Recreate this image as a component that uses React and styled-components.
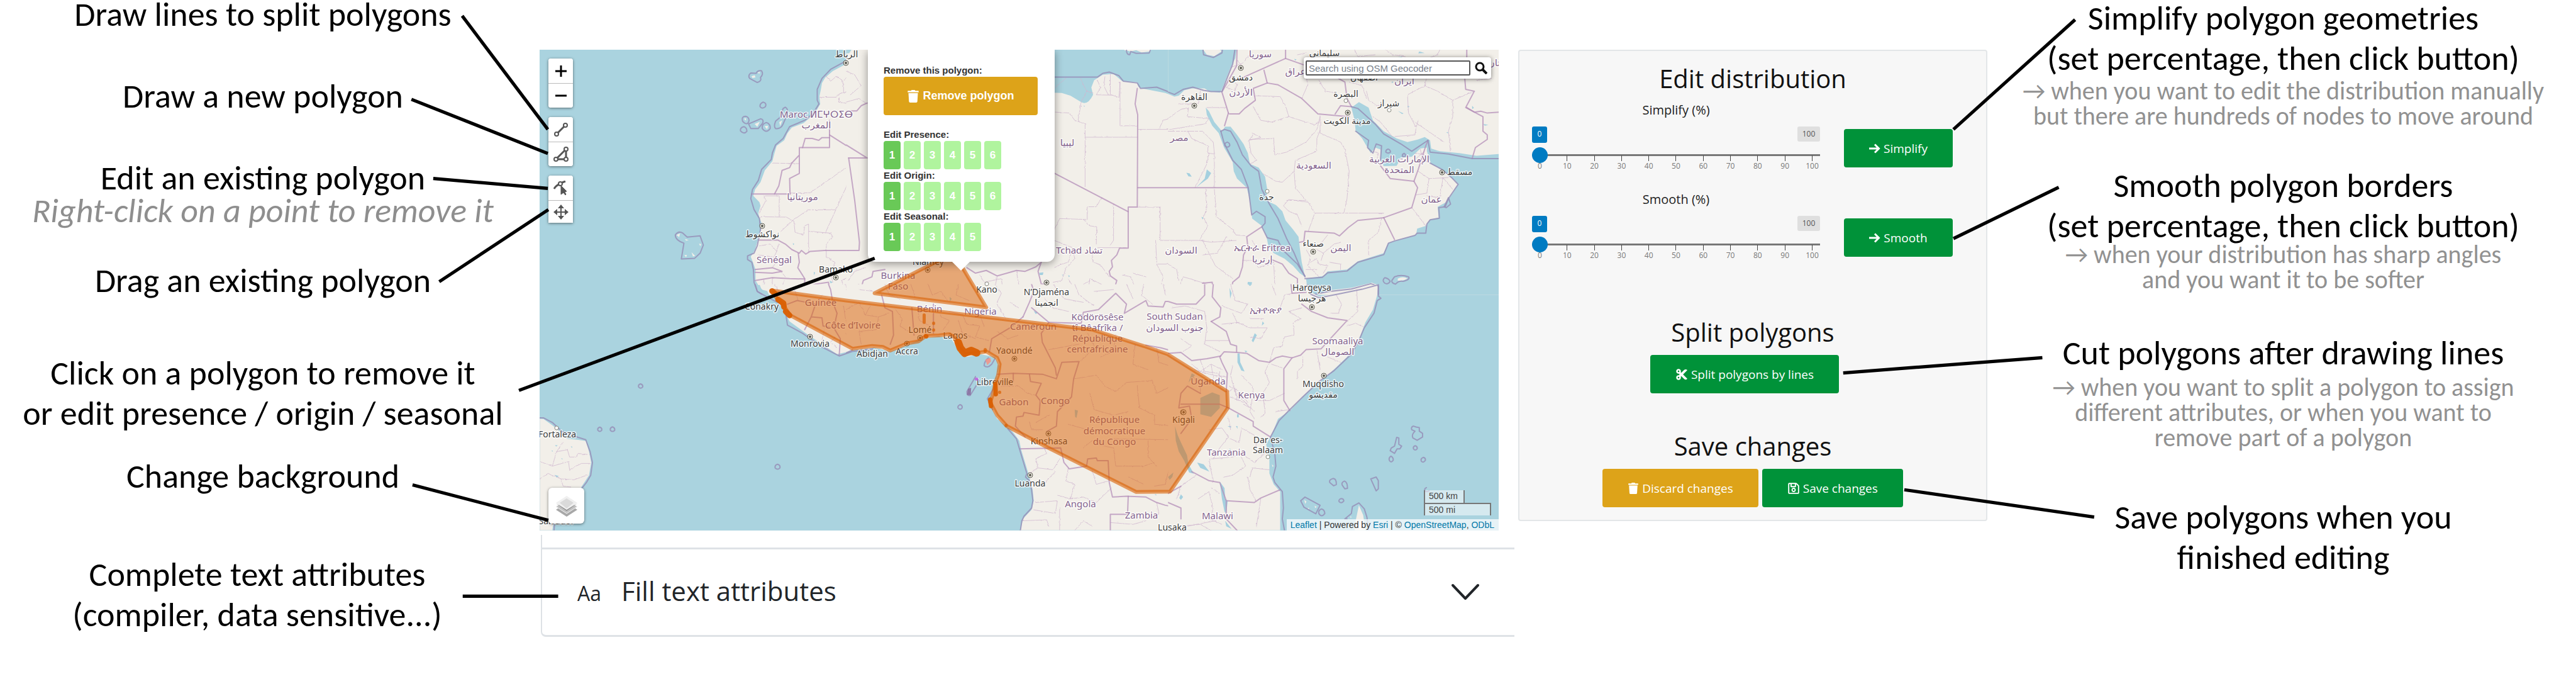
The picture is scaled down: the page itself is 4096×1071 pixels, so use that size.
import React, { useState } from "react";
import styled, { createGlobalStyle } from "styled-components";
import { FaTrash, FaCut, FaRegSave } from "react-icons/fa";

const GlobalStyle = createGlobalStyle`
  *, *::before, *::after { box-sizing: border-box; }
  body { margin: 0; background: #fff; }
  button, input { font: inherit; }
`;

const calloutFont = `Carlito, Calibri, Lato, sans-serif`;
const panelFont = `"Open Sans", "Noto Sans", sans-serif`;
const mapFont = `"Liberation Sans", Arial, sans-serif`;

const Page = styled.div`
  position: relative;
  display: grid;
  grid-template-columns: 858fr 1556fr 746fr 936fr;
  align-items: start;
  min-height: 100vh;
  overflow: hidden;
`;

/* ---------- callouts ---------- */

const Callouts = styled.aside`
  display: flex;
  flex-direction: column;
  min-width: 0;
  margin-top: -3px;
  padding-right: ${(p) => (p.$side === "left" ? "22px" : "0")};
  padding-left: ${(p) => (p.$side === "right" ? "5px" : "0")};
  font-family: ${calloutFont};
  text-align: center;
  white-space: nowrap;
`;

const Callout = styled.p`
  margin: ${(p) => p.$gap || 0}px 0 0;
  padding-right: ${(p) => p.$inset || 0}px;
  font-size: 54px;
  line-height: ${(p) => (p.$tall ? 64 : 52)}px;
  color: #000;
`;

const Tip = styled(Callout)`
  font-style: italic;
  color: #8e8e8e;
`;

const Hint = styled.p`
  margin: ${(p) => p.$gap || 0}px 0 0;
  font-size: 40px;
  line-height: 40px;
  color: #919191;
`;

const Leaders = styled.svg`
  position: absolute;
  top: 0;
  left: 0;
  width: 100%;
  height: auto;
  pointer-events: none;
  z-index: 5;
`;

const leaderLines = [
  [847, 29, 1004, 237],
  [754, 182, 1004, 281],
  [794, 327, 1004, 345],
  [805, 516, 1005, 384],
  [951, 715, 1603, 473],
  [756, 888, 1005, 953],
  [848, 1092, 1023, 1092],
  [3803, 36, 3580, 237],
  [3773, 343, 3580, 437],
  [3743, 655, 3378, 683],
  [3838, 947, 3490, 897],
];

/* ---------- map ---------- */

const Centre = styled.main`
  min-width: 0;
  padding-top: 79px;
`;

const MapFrame = styled.section`
  position: relative;
  margin-right: 31px;
  aspect-ratio: 1525 / 764;
  overflow: hidden;
  background: #aad3df;
  font-family: ${mapFont};
`;

const MapArt = styled.svg`
  display: block;
  width: 100%;
  height: 100%;
`;

const PlaceName = styled.text`
  font-family: "Noto Sans", "DejaVu Sans", sans-serif;
  font-size: ${(p) => (p.$city ? 14 : 15)}px;
  text-anchor: middle;
  fill: ${(p) => (p.$city ? "#3d3d3d" : "#85648f")};
  stroke: rgba(255, 255, 255, 0.75);
  stroke-width: 3px;
  stroke-linejoin: round;
  paint-order: stroke;
`;

const SX = 0.343;
const SY = 0.2892;

/* Each tile keeps its own drawing units; x and y place it on the map. */
const tiles = [
  {
    x: -7.2, y: -9.3, w: 1568, h: 1380,
    land: [
      "M1465,32 1462,45 1445,85 1440,112 1380,150 1345,185 1330,215 1325,250 1318,290 1322,330 1300,375 1270,410 1245,435 1190,460 1170,490 1155,530 1120,560 1110,600 1100,645 1065,695 1045,760 1020,800 1012,835 1040,870 1045,890 1035,930 1040,955 1052,990 1045,1030 1030,1090 1020,1130 1000,1170 1010,1200 1022,1240 1022,1300 1035,1325 1060,1320 1085,1380 1568,1380 1568,32Z",
      "M1003,178 1018,172 1022,184 1008,188Z M1032,158 1042,152 1040,164Z M968,412 978,408 978,422Z M1018,440 1042,428 1030,456Z M1064,452 1080,450 1076,470Z M1132,430 1146,420 1136,452Z M655,1050 672,1042 668,1062Z M725,1145 742,1165 732,1168Z M760,1098 770,1100 766,1112Z M692,1160 704,1160 700,1172Z M695,1072 712,1078 700,1082Z",
    ],
    coast: [
      "M1465,32 1440,95 1370,140 1330,190 1308,250 1308,310 1316,330 1290,380 1250,420 1180,455 1150,520 1115,555 1100,600 1095,635 1050,690 1035,750 1008,800 1000,850 1015,910 1040,960 1045,1020 1030,1110 1015,1150 985,1165 985,1185 1005,1200 1012,1240 1015,1310 1030,1360 1050,1375",
      "M1000,160Q985,175 995,190L1030,212Q1052,205 1045,185 1060,165 1050,148 1030,145 1025,162Z",
      "M1057,320Q1040,330 1043,345 1052,360 1068,345 1075,325 1057,320Z",
      "M975,398Q955,400 962,425 985,455 992,420 990,400 975,398Z M968,455Q950,460 952,478 968,500 982,480 982,460 968,455Z M990,440 1045,412Q1062,415 1055,435L1035,465 1000,465Z M1072,432Q1050,440 1053,465 1072,495 1090,465 1092,440 1072,432Z",
      "M1160,348Q1175,355 1168,390L1150,440Q1140,470 1115,465 1105,455 1115,425L1135,405 1150,355Z",
      "M650,1050Q665,1025 685,1040L705,1062 765,1055 780,1105 765,1150 740,1178 678,1182 690,1095Q650,1080 650,1050Z",
    ],
    major: [
      "M1465,370H1500L1515,345 1540,325", "M1365,420V570H1225V712L1180,740 1182,825", "M1365,500 1540,632",
      "M1240,570 1252,520 1285,520 1315,530 1330,515H1365", "M1003,825H1182", "M1110,825 1130,780 1145,695 1180,680 1190,655 1222,615",
      "M1540,627H1455L1475,860 1497,1085 1505,1135H1340L1275,1140 1255,1155 1235,1135 1225,1150 1190,1130 1160,1100 1125,1078H1040",
      "M1220,1150 1225,1200 1218,1230 1250,1290V1340L1255,1380", "M1020,1240 1100,1230 1145,1250 1100,1260 1020,1255", "M1020,1300 1100,1285 1180,1290 1250,1292",
      "M1250,1340 1300,1320 1360,1310 1370,1370 M1490,1380 1500,1320 1568,1250",
    ],
    minor: [
      "M1320,293H1395L1410,275 1480,250 1500,215 1510,160 1480,130 1475,85 1490,50 1540,60", "M1350,180 1370,205 1395,180 1425,200 1430,240 1430,265",
      "M1410,280V320L1455,330 1465,370 1568,380", "M1445,115 1475,150 1430,200 M1510,160 1568,170", "M1100,655 1225,658", "M1455,670 1275,818 1182,820", "M1460,740 1345,1040",
      "M1060,835H1132V950 M1060,835 1070,860 1040,930", "M1045,950 1165,952 1200,975 1205,1035 1245,1050", "M1392,912H1265L1195,970 1140,1030",
      "M1245,1050 1250,1000 1268,990V1145", "M1270,1030 1370,1040 1380,1060 1350,1100V1135", "M1500,1065 1540,1055", "M1040,1110 1090,1100 1120,1140 1105,1180 M1035,1160 1100,1170 M1130,1100 1120,1140",
      "M1100,1230 1130,1180 1180,1200 M1160,1280 1140,1250 M1350,1135 1350,1170 1390,1200 1370,1260 1380,1310 M1460,1140 1450,1210 1490,1260 1420,1300 1440,1350 M1505,1135 1530,1190 1568,1200",
      "M1060,1300 1065,1330 1140,1340 1155,1300 M1100,1285V1370 M1490,600 1540,570",
    ],
    water: ["M1195,1095 1202,1100 1196,1106Z M1292,1252 1298,1258 1293,1272Z M1365,1300 1380,1310 1370,1316Z"],
    rings: [[1442, 104], [1053, 1000], [1393, 1284]],
    names: [
      ["الرباط", 1444, 75, 1], ["Maroc ⵍⵎⵖⵔⵉⴱ", 1305, 405], ["المغرب", 1305, 465], ["موريتانيا", 1240, 860], ["نواكشوط", 1054, 1062, 1], ["Sénégal", 1107, 1206], ["Bamako", 1393, 1256, 1],
    ],
  },
  {
    x: 487.3, y: -9.3, w: 1568, h: 1380,
    land: ["M0,32H1568V1380H0Z"],
    sea: ["M960,32H1568V250L1525,290 1480,270 1370,245 1355,235 1350,212 1280,205 1240,165 1190,170 1150,200 1137,240 1145,280Q1120,340 1090,320L1040,285 1000,270 960,268Z", "M0,32H25L15,50 0,55Z"],
    isle: ["M1290,35 1320,42 1345,35 1370,48 1408,42 1410,32H1290Z"],
    coast: ["M965,183H1165L1190,162 1220,155 1265,175 1285,205 1350,215 1365,245 1440,238 1520,275 1568,240", "M1300,35Q1300,60 1315,60L1320,42 1345,52 1405,50 1410,36"],
    major: [
      "M1350,245 1340,330 1352,390 1350,897H1308V1122H1268L1255,1160 1230,1190 1235,1225 1220,1250 1225,1275 1255,1300 1245,1340 1265,1380", "M965,710 1308,922", "M1352,790H1568",
      "M560,1230 600,1260 650,1245 700,1275 790,1245 830,1250 880,1225 905,1200 890,1250 905,1320 930,1320", "M60,1380 80,1300 120,1280 125,1250 180,1240", "M12,627 40,860 62,1090 60,1135H0", "M12,627H98L0,555", "M0,368H50L70,340 98,325",
    ],
    minor: [
      "M1108,440V785 M1108,513H1350 M970,375 1035,380 1060,420 1108,440", "M1085,187 1115,260 1090,320 1075,425 M970,240 1020,187 M1115,260 1145,270", "M1165,200 1180,240 1160,280 1235,282 M1200,180 1195,230 1215,280 M1225,165V280 M1235,282 1265,295 1270,210",
      "M1270,210V450H1350 M1352,470H1568 M1450,470 1470,420 1530,400 1568,360 M1508,470 1568,420", "M1456,897H1350 M1456,897V1080H1568 M1435,1080 1440,1200", "M1185,845 1160,895H1118V965L990,960 965,1020", "M1100,965 1130,1000 1162,1005 1160,1100 M1240,880V1080L1225,1105 M1165,1120H1300",
      "M965,1080 1050,1120 1030,1200 1000,1210 965,1230 M1140,1150 1145,1200 1180,1215 1220,1280 M1050,1120 1060,1180 1020,1230 1000,1300 960,1310",
      "M1280,1270 1320,1280 1340,1340 1380,1350 M1450,1380 1470,1280 1440,1210 1500,1210 1540,1300 1568,1290 M1330,1260 1390,1280 M1120,1380 1130,1290 1200,1330 1240,1370 M1030,1290 1060,1350 1130,1300",
      "M620,1270 640,1310 720,1290 730,1380 M700,1280 690,1340 640,1350 M790,1250 800,1320 850,1340 M10,1300 40,1250 90,1230 M0,150 40,170 70,230 20,280 M0,320 60,300 98,330",
    ],
    water: ["M895,1258 915,1255 912,1270 898,1270Z M1000,1268H1006V1275Z M1030,1270 1038,1276 1032,1282Z M1100,340H1106V346Z M92,1342H100V1350H92Z"],
    rings: [[378, 1241], [928, 1311]],
    dots: [[652, 1320]],
    names: [
      ["ليبيا", 1025, 562], ["Tchad تشاد", 1080, 1153], ["Niamey", 380, 1216, 1], ["Burkina", 240, 1290], ["Faso", 240, 1350], ["Kano", 653, 1368, 1],
    ],
  },
  {
    x: 999.2, y: -9.3, w: 1535, h: 1380,
    land: ["M0,32H1535V1380H0Z"],
    sea: [
      "M0,32H318L312,80 290,130 270,190 250,250 240,268 190,260 170,245 110,245 75,255 50,285 30,290 0,275Z",
      "M175,350 190,370 215,430 250,480 265,455H290L320,500 350,550 370,600 380,660 420,680 450,730 460,800 455,860 500,885 530,920 545,970 580,1020 605,1060 612,1130 620,1200 635,1280 610,1260 580,1220 540,1180 490,1150 465,1110 455,1050 435,1000 390,960 380,860 365,790 320,740 305,700 300,650 260,570 235,490 205,450 180,390Z",
      "M640,1290 720,1275 740,1250 830,1240 880,1195 1000,1150 1020,1095 1060,1080 1150,1050 1155,1015 1195,1000 1215,965 1255,955 1250,895 1290,870 1320,820 1345,770 1330,750 1310,735 1270,690 1220,660 1200,590V570L1170,575 1130,620 1080,625 1060,670 1000,672 985,640V580L960,570 940,600 920,560 900,520 870,480 865,420 850,350 885,320 930,350 950,420 1000,480 1060,520 1110,540 1160,525 1190,512 1215,530 1220,575 1260,590 1350,600 1430,615 1535,605V1380H970L975,1325 945,1312 850,1340 740,1355 690,1380H650Z",
    ],
    isle: ["M165,35 180,60 215,68 250,40 240,32H165Z M1065,1290Q1090,1275 1110,1290 1090,1305 1065,1300Z"],
    coast: [
      "M0,265 30,278 70,250 115,238 165,255 200,262 250,262 270,200 300,110 310,32", "M162,32 165,60 210,75 250,50 252,32",
      "M245,480 260,545 300,640 340,690 372,790 388,940 410,920 450,950V985L435,1005 460,1065 510,1080 530,1130 600,1210 635,1275", "M245,480 262,470 290,480 320,540 345,610 385,670 420,700 435,800 470,880 510,960 550,1070 585,1150 610,1220 635,1280",
      "M635,1290 715,1283 740,1258 830,1248 880,1200 1000,1158 1022,1095 1050,1083 1145,1052 1155,1040H1195L1200,990 1215,967 1258,958 1255,900 1285,895 1300,850 1345,772 1315,735 1270,690 1215,655",
      "M1205,530 1215,595 1300,605 1410,630H1535", "M850,345 880,355 960,440 1000,495 1080,550 1130,590 1205,530", "M870,480 930,530 925,570 950,600 965,550 990,560 985,640 M1280,895 1300,845 1310,880 1290,900Z",
      "M275,540Q260,545 264,560 275,575 286,560 288,545 275,540Z M1020,578Q1008,582 1010,595 1020,605 1031,595 1032,582 1020,578Z M1095,602Q1084,606 1087,618 1100,622 1104,612Z",
      "M1005,1285Q990,1300 1005,1315 1020,1325 1030,1305 1022,1288 1005,1285Z M1050,1280Q1080,1265 1115,1280 1125,1295 1090,1305 1070,1300 1055,1320 1035,1315 1038,1300Z", "M665,1380 740,1362 850,1347 940,1318 975,1330V1380",
    ],
    major: [
      "M280,380 250,265 262,240 318,120 320,32", "M545,32V80L385,165 330,195", "M280,380 262,450", "M445,145 460,215 395,245 405,310 355,355 330,385H285", "M460,215 510,225 620,300 695,385 840,400", "M775,385 800,340 850,345",
      "M0,790H370", "M1000,955 1130,900 1157,790 1140,755 1030,740 985,670", "M1140,755 1160,690 1195,560 1205,530", "M1000,955 1050,1075", "M1000,955 880,970 835,1010 795,1055 770,1040 635,1030 630,1085 610,1090",
      "M1410,630 1425,570 1480,525V500L1460,480V400L1380,350 1420,260 1380,250 1375,180", "M1385,350 1420,375 1450,370 1480,380 1535,375", "M790,190 820,210 830,300 850,345", "M1385,32V80",
      "M435,1005 365,1060 370,1115 350,1160 345,1225 330,1280 300,1310 290,1380", "M480,1185 530,1210 560,1260 600,1290V1320L580,1345", "M160,1315 205,1310 210,1380", "M545,80 640,120 720,110",
    ],
    minor: [
      "M175,800 180,900 165,955 185,1000 145,1080H0 M145,1080 200,1090 315,1080", "M215,800 225,950 300,1020 315,1050 365,1055 M215,600V790 M125,790 180,660 190,600", "M90,475 110,520 185,560V600L215,605 210,540 160,480H0",
      "M0,410 60,360 95,350 90,400 190,410 170,440 10,470 M180,350H270 M50,330 140,330 150,260", "M705,395V490L800,540 820,580 840,700 830,850 815,930", "M705,475 690,520V590L590,640 585,700 530,760 500,755 435,710",
      "M380,525 490,520 495,610 550,595 640,540 690,470 705,400", "M390,490 430,515 375,530 385,600 410,640 380,660", "M400,285 520,290 545,340 560,400 480,430 430,420 395,345 M560,400 680,445 700,430",
      "M680,930H1000 M650,1030 680,930 650,870 560,855 535,890 560,920 600,940 620,1000 M585,700 590,790 640,860 550,860", "M1130,900 1195,1000 M990,960 975,1035 930,1080V1160 M1150,830 1200,820 1210,740 M1200,835 1260,845 1275,735 1320,800 M1160,700 1210,740 1300,735",
      "M1110,280 1115,380 1150,460 1145,500 1040,510 985,430 950,400 M1110,280 1190,230 1250,260 1320,310V400L1300,480 1310,600 M1145,430 1280,540 M1160,420 1150,460", "M620,300 650,220 640,190 M920,260 930,310 970,340 1000,330 M1320,310 1380,280 1420,260 M840,210 900,230 920,300 M700,200 730,260 780,270 M1190,230 1200,180",
      "M40,1380 70,1280 100,1290 180,1320 M160,1080 190,1150 220,1220 300,1290 M0,1210 40,1240 50,1300 M345,1190 390,1190 420,1230 490,1200 495,1330 540,1380 M160,1160 230,1150 270,1060 M390,1080 410,1120",
      "M640,1100 700,1110 740,1050 M660,1200 690,1180 700,1210 740,1220 720,1260 M640,1130 660,1170 650,1220 700,1280 M720,1150 770,1100 800,1090 M750,1200 800,1210 800,1240 M690,1130 720,1150 710,1190 M640,1240 690,1240",
      "M290,130 340,110 380,60 M320,90 350,130 M280,200 320,220 310,260 M290,220 270,240 300,250 M1010,32 1040,60 1100,70 M1180,90 1250,60 1260,32 M600,60 640,50 M865,32 880,70 960,60 M1430,200 1500,190",
      "M1145,600 1190,610 1200,650 M1170,580 1180,640 M1150,630 1190,590 M950,590 975,600 970,630 M375,530 395,500",
    ],
    water: ["M85,708 100,712 110,730 95,728Z M180,690 200,710 185,740 150,770 130,790 170,740Z M1066,368 1092,382 1085,386Z M1110,340 1120,344 1112,350Z M1040,205 1045,212 1036,215Z M370,1308 390,1310 385,1330 368,1325Z M255,1325H262V1345Z M1410,340 1418,352 1410,358Z M1462,440 1485,445 1468,450Z M1290,485H1298V493Z M1165,42 1190,50 1160,52Z M1065,70H1085V74Z M585,82 596,86 590,92Z M155,950 165,955 160,965Z"],
    rings: [[337, 134], [121, 339], [833, 377], [1271, 706], [673, 1143]],
    dots: [[825, 312], [1026, 365], [461, 810]],
    names: [
      ["سوريا", 428, 72], ["دمشق", 337, 200, 1], ["الأردن", 337, 285], ["القاهرة", 122, 308, 1], ["مصر", 52, 532], ["سليمانى", 725, 67, 1], ["عراق", 590, 172], ["اصفهان", 910, 203, 1], ["ايران", 1095, 223], ["البصرة", 824, 293, 1],
      ["شيراز", 1024, 344, 1], ["مدينة الكويت", 831, 440, 1], ["السعودية", 677, 684], ["الإمارات العربية", 1072, 650], ["المتحدة", 1072, 710], ["مسقط", 1351, 720, 1], ["عمان", 1222, 873], ["جدة", 458, 860, 1],
      ["ኤርትራ Eritrea", 437, 1138], ["إرتريا", 437, 1200], ["صنعاء", 672, 1114, 1], ["اليمن", 801, 1138], ["السودان", 60, 1152], ["Hargeysa", 666, 1356, 1], ["ستان", 1530, 122],
    ],
  },
  {
    x: -7.2, y: 372.5, w: 1568, h: 1353,
    land: [
      "M22,740 40,742 80,775 120,815 150,850 200,856 235,862 250,920 260,980 250,1050 228,1090 200,1140 150,1200 90,1270 80,1353H22Z",
      "M1040,0 1050,30 1085,40 1120,80 1165,170 1180,205 1250,265 1330,330 1400,385 1450,372 1480,360 1568,350V0Z",
    ],
    coast: [
      "M22,735H40L80,760 125,810 200,842 235,855 255,920 266,980 258,1050 238,1090 205,1140 M90,1320 88,1353", "M1020,0 1030,40 1090,80 1140,110 1162,160 1170,225 1240,270 1330,345 1410,395 1470,370 1568,355",
      "M489,548Q477,552 480,565 489,578 499,565 501,552 489,548Z M300,786Q288,790 291,803 300,816 309,803 311,790 300,786Z M359,784Q346,789 349,803 359,816 369,803 371,789 359,784Z M1124,990Q1110,995 1113,1010 1124,1024 1135,1010 1138,995 1124,990Z",
    ],
    major: ["M1170,110 1215,90 1300,110 1280,180 1250,250 M1410,390 1415,300 1385,240 1400,160 1380,100 1370,30 1360,0 M1280,180 1330,185 1335,230 1385,240", "M1500,0 1510,80 1568,60"],
    minor: [
      "M22,975 80,1000 100,920 130,870 M100,920 150,910 160,950 190,950 200,930 255,938 M80,1000 155,975 160,1020 215,985 255,985 M22,1070 60,1040 120,1070 180,1075 240,1050 M120,1070 130,1110 165,1115",
      "M1110,0 1140,60 M1200,20 1220,90 M1440,0 1450,60 M1300,120 1330,60 M1430,120 1440,200 1500,230 1520,300 M1480,120 1470,190 M1340,250 1330,310 1360,360 M1390,290 1370,320 1400,350 M1440,270 1480,330 M1530,130 1510,200 1568,210",
    ],
    water: ["M92,885H105L98,892Z M75,915H82V921Z M165,892H172V900Z M120,958H127V964Z M90,1048 110,1055 100,1062Z M1045,20 1060,40 1050,42Z"],
    dots: [[101, 790]],
    rings: [[1274, 288]],
    names: [["Guinée", 1323, 119], ["Côte d’Ivoire", 1473, 245], ["Conakry", 1051, 141, 1], ["Monrovia", 1275, 345, 1], ["Abidjan", 1562, 400, 1], ["Fortaleza", 104, 841, 1], ["Salvador", 100, 1318, 1]],
  },
  {
    x: 487.3, y: 372.5, w: 1568, h: 1353,
    land: ["M0,0H1568V1353H808L820,1290 860,1240 870,1190 865,1130 845,1040 812,910 803,860 765,800 700,740 665,660 690,560 710,450 690,400 620,385 560,400 520,370 490,300 430,285 350,300 290,330 205,370 120,345 20,360 0,365Z"],
    coast: [
      "M0,378 30,362 M750,795 790,850 805,910 838,1040 832,1060 850,1080 860,1130 866,1190 860,1230 825,1275 815,1300 808,1353", "M660,405Q640,425 640,448 655,465 675,440 L690,410", "M600,508 560,590Q560,615 575,612L618,530",
      "M529,662Q516,668 519,680 529,695 538,680 541,667 529,662Z", "M690,560 655,630 680,690",
    ],
    major: [
      "M700,495 775,490 910,495 975,520 1000,430 1080,425 1055,520 1045,620 980,700 975,780 930,810", "M775,490V535H715", "M850,495 855,535 905,545 880,610 900,640 895,720 825,705 820,725 790,730 785,780 830,840",
      "M805,905 995,900 1010,980 1035,1015 1115,1000 1120,960 1160,955 1165,970H1215L1220,1090 1235,1170 1300,1165 1390,1170 1440,1200 1480,1215 1550,1230", "M1308,1165 1305,1265H1225V1353", "M975,500 970,460 910,320 905,270 940,210 860,130",
      "M820,180 850,100 870,40 860,0", "M940,210 1090,215 1100,155 1170,140 1250,50 1300,110 1290,160 1390,90 1400,120 1470,125 1480,95 1520,95 1515,130 1540,160 1568,110", "M665,370 675,300 760,240 820,180", "M305,130 315,280 M405,110V270 M165,60 180,130 215,150 220,280 205,330",
      "M1500,1150 1510,1200 1550,1220 M1390,335 1460,350 1568,385 M1568,640 1530,700 1540,760 1525,850 1545,950 1568,970",
    ],
    minor: [
      "M0,140 60,100 90,170 150,180 140,250 60,260 70,330 M90,170 110,120 M150,180 200,160 M230,140 260,190 250,230 290,260 M330,120 340,200 390,230 M430,120 440,180 480,200 450,250 M480,150 540,170 560,220 620,230 600,290 660,310",
      "M520,200 540,270 600,300 M620,170 640,230 M180,0 200,60 250,80 M300,0 320,70 M380,0 400,60 440,40 470,90 M520,0 510,60 570,90 M60,30 130,40 M700,110 740,190 M760,100 800,130 M690,0 720,50 700,100 M700,260 750,300 800,280",
      "M1120,270 1150,340 1110,400 1080,425 M1250,280 1240,370 1180,400 M1340,330 1330,440 1400,470 M1440,350 1450,430 1530,460 M940,360 1080,330 M1060,520 1160,500 1200,560 1250,590 1300,540 1420,530 1440,600 1510,560 1568,570",
      "M1130,600 1150,690 1240,720 1310,700 M1350,560 1360,680 1430,720V770L1520,780 M1100,900 1140,860 1160,880 1240,900 M1240,850 1500,855 M1030,770 1120,800 M1240,900 1250,1000H1310L1380,1000 1430,980 M1400,860V950L1440,1000",
      "M880,960 930,930 920,905 M880,960 890,1010 850,1040 M890,1010 960,1020 990,960 M1030,1010 1020,1080 1060,1100 1040,1180 980,1160 M920,1110 930,1080 970,1030 M1140,1020 1160,1100 1220,1080 M880,1200 980,1190 970,1260 870,1240",
      "M990,1230V1353 M820,1300 930,1295 940,1330 M1040,1180 1100,1170 1160,1200 1230,1120 M1060,1353 1100,1300 1140,1330 M1225,1310 1330,1320 1390,1300 M1440,1200 1450,1260 1400,1290 1350,1280 M720,560 800,560 840,600 880,610 M850,760 860,800 910,800 M940,720 880,760",
      "M1300,0 1330,80 M1380,0 1370,60 1420,110 M1470,0 1480,60 M960,0 1010,80 1100,100 M1060,0 1080,60 1150,120 M1150,40 1240,30 M920,80 960,130 1030,150 M1500,1000 1480,1100 1430,1110 M1310,1060 1380,1100",
    ],
    water: ["M870,148 888,155 880,165Z M1060,690 1075,695 1068,735 1062,730Z M1495,1070 1520,1035 1510,1075 1500,1085Z M1530,860 1545,900 1560,970 1568,980V950L1550,900 1540,850Z M1545,1160 1560,1170 1550,1185Z M1515,690H1530V720H1518Z M1535,620 1550,615 1545,640Z M1430,1155H1438V1162Z M480,70 490,80 482,95Z"],
    rings: [[342, 296], [281, 327], [780, 411], [938, 822], [853, 1051], [1562, 702]],
    names: [
      ["N’Djaména", 928, 62, 1], ["انجمينا", 930, 118, 1], ["Bénin", 388, 155], ["Nigeria", 622, 168], ["Lomé", 342, 268, 1], ["Lagos", 506, 298, 1], ["Accra", 282, 384, 1], ["Cameroun", 868, 250], ["Ködörösêse", 1166, 198], ["tî Bêafrîka /", 1166, 256],
      ["République", 1166, 316], ["centrafricaine", 1166, 376], ["South Sudan", 1524, 195], ["جنوب السودان", 1524, 256], ["Yaoundé", 780, 382, 1], ["Libreville", 691, 556, 1], ["Gabon", 779, 666], ["Congo", 970, 657], ["République", 1243, 764],
      ["démocratique", 1243, 824], ["du Congo", 1243, 884], ["Kigali", 1564, 764, 1], ["Kinshasa", 940, 879, 1], ["Luanda", 852, 1112, 1], ["Angola", 1086, 1227], ["Zambia", 1368, 1289], ["Lusaka", 1512, 1355, 1],
    ],
  },
  {
    x: 999.2, y: 372.5, w: 1535, h: 1353,
    land: [
      "M0,0H645L665,45 700,68 800,45 900,20 970,0V60L950,140 915,210 890,290 830,400 750,490 700,540 640,600 570,690 510,740 480,830 455,880 470,950V1040L490,1100 520,1140V1353H0Z",
      "M870,1300 885,1215 905,1270 915,1353H865Z", "M632,1185 642,1195 636,1208Z M648,1228 656,1232 650,1236Z M680,1218 690,1224 682,1230Z M845,1275 852,1280 846,1284Z M482,990 490,1000 484,1004Z",
    ],
    coast: [
      "M975,0 975,65 987,78 970,90 955,160 910,240 885,310 850,385 770,475 700,535 620,625 560,695 515,750 475,840 495,930 500,1000 487,1060 495,1090 530,1140 535,1230 530,1290 540,1353",
      "M645,0 660,55 700,75 800,52 900,28 970,5", "M820,1290 850,1260 855,1222 885,1202 910,1235 922,1280 930,1353 M820,1290H830",
      "M765,1068Q745,1075 750,1090L768,1108 780,1102Q782,1070 765,1068Z M818,1082Q802,1090 808,1105L820,1125 832,1122Q832,1088 818,1082Z M940,1070 965,1060 975,1080V1125L965,1136Z M804,1178Q790,1182 793,1195 804,1208 815,1192 815,1180 804,1178Z",
      "M615,1190 635,1170 705,1215 685,1262 630,1225Z M712,1235Q696,1240 699,1260 712,1285 727,1260 725,1238 712,1235Z", "M1138,780Q1125,785 1130,800L1145,808Q1128,825 1135,845L1155,858 1180,840V820L1165,808 1165,788 1150,785Z",
      "M1060,842 1070,845V880L1083,890 1075,905H1062L1050,930 1030,915 1035,900 1050,890Z M1146,888Q1135,892 1138,905 1146,918 1155,905 1157,892 1146,888Z M1034,945Q1022,952 1026,968 1034,985 1044,968 1045,952 1034,945Z M1183,952Q1170,958 1174,972 1183,985 1193,968 1195,955 1183,952Z M1198,1118Q1188,1122 1190,1135 1200,1145 1210,1135",
    ],
    major: [
      "M620,110 665,150 740,185 830,200 760,290 710,355 640,360 615,390 575,405 530,395 500,405 470,430 420,420 365,380 320,375 260,372 240,400 250,430 275,490 270,590", "M575,405 537,465V640L565,695", "M280,680 395,755V780L475,840",
      "M200,205 240,180 245,130 205,70 210,0", "M200,205 270,260 290,330 318,340V372", "M0,380 60,375 110,420 180,410 245,395", "M0,95 40,110H130L170,60V0", "M275,1190 400,1200 430,1175 520,1130", "M110,1030 190,1080 240,1090 270,1190V1290L320,1353",
      "M0,1200 60,1230V1290 M570,0 575,50 640,45", "M60,660H240L280,680", "M150,600 90,560 60,600 50,680 100,670 110,740 60,820 M0,1150 60,1110",
    ],
    minor: [
      "M875,30 880,150 830,205 M780,60 805,110 790,160H755 M830,230 870,215 905,235 M690,360 705,470 M625,400V450L600,480V520 M740,400 800,430", "M620,130 560,150 615,190 580,210 585,280 540,290 530,340 490,350 470,430 M520,130 540,60 580,50 M480,0 500,60 M250,120 340,160 370,110 310,90 290,0",
      "M300,160 320,210 380,240H460L430,300 380,290 M380,190 440,190 M330,210 250,220 M175,310 280,310 M180,240 170,330 240,370 M60,300 110,340 70,370 M20,130 80,120 170,150 180,240",
      "M470,430 450,480 470,540 440,600 450,710 430,730 M480,440 530,460 M340,500 390,560 400,640 470,640 540,600 M300,450 290,500 310,590 330,640 M390,630 380,700 400,740 M500,700 560,690 M350,640 400,700",
      "M110,440 150,480 200,440 250,470 M150,420 170,480 230,490 260,530 M120,470 210,500 270,510 M200,440 210,520 M240,480 230,560 M280,590 310,570 320,640 M290,620 350,650 M285,560 330,590 370,650 M320,600 380,680 350,660",
      "M190,800 250,790 280,840 240,900 210,960 M340,800 330,870 290,850 M280,730 290,800 M340,790 400,830 410,900 M200,960 300,950 340,930 400,980 450,930 M190,960 210,1090 M300,1050 260,1060 M300,1050 360,1000 340,950 M380,1060 390,1010 470,1020 M370,1060 380,1130 410,1195",
      "M430,1180 410,1330 M140,1180 190,1140 210,1240 190,1290 250,1320 M200,1120 240,1150 M60,1330 150,1320 200,1353 M40,1180 60,1110 130,1050 M90,1330 220,1300 M150,600V560L110,500",
    ],
    water: [
      "M322,380H332L335,430 355,480 340,475 322,430Z", "M240,1085 262,1120 265,1180 277,1190 270,1260 262,1250 250,1180Z M265,1300 295,1345 270,1330Z", "M135,980 165,990 192,1030 150,1010Z", "M150,625 205,595 240,610V680L200,730 150,715Z",
      "M32,780 45,830 60,870 88,940 95,990 120,1042 98,1035 75,970 50,920 36,860Z", "M402,270 412,280 395,320 388,310Z M438,205 446,215 435,228Z M355,365 368,368 360,376Z M60,1155 70,1170 60,1185 52,1175Z M0,1060 25,1035 20,1060 8,1075Z M285,20 295,50 288,80Z M370,0H390L380,10Z M320,715H328V732H320Z M276,780H292V790Z M315,780H322V795Z M283,905H290V912Z M110,490 125,500 95,540Z",
    ],
    rings: [[666, 125], [721, 504], [72, 702]],
    dots: [[463, 950]],
    names: [
      ["هرجيسا", 667, 94, 1], ["ኢትዮጵያ", 452, 160], ["Soomaaliya", 788, 331], ["الصومال", 788, 390], ["Muqdisho", 720, 566, 1], ["مقديشو", 720, 625, 1], ["Uganda", 186, 553], ["Kenya", 388, 629], ["Dar es-", 464, 872, 1], ["Salaam", 464, 929, 1], ["Tanzania", 270, 941], ["Malawi", 231, 1292],
    ],
  },
];

const Line = ({ d, color, width, opacity = 1 }) => (
  <path d={d} fill="none" stroke={color} strokeWidth={width} strokeOpacity={opacity} strokeLinejoin="round" strokeLinecap="round" vectorEffect="non-scaling-stroke" />
);

function Tile({ tile, index }) {
  return (
    <g transform={`translate(${tile.x} ${tile.y}) scale(${SX} ${SY})`} clipPath={`url(#tile${index})`}>
      <clipPath id={`tile${index}`}>
        <rect width={tile.w} height={tile.h} />
      </clipPath>
      {tile.land.map((d) => <path key={d} d={d} fill="#f2efe9" />)}
      {(tile.sea || []).map((d) => <path key={d} d={d} fill="#aad3df" />)}
      {(tile.isle || []).map((d) => <path key={d} d={d} fill="#f2efe9" />)}
      {tile.water.map((d) => <path key={d} d={d} fill="#a5d0df" />)}
      <g filter="url(#jagged)">
        {tile.minor.map((d) => <Line key={d} d={d} color="#cfb5cf" width={1} opacity={0.75} />)}
      </g>
      {tile.major.map((d) => <Line key={d} d={d} color="#b48fb8" width={2} opacity={0.75} />)}
      {tile.coast.map((d) => <Line key={d} d={d} color="#9791b8" width={2} opacity={0.85} />)}
    </g>
  );
}

function TileNames({ tile }) {
  const px = (x) => Math.round(tile.x + x * SX);
  const py = (y) => Math.round(tile.y + y * SY);
  return (
    <g>
      {(tile.rings || []).map(([x, y]) => (
        <g key={`${x}-${y}`}>
          <circle cx={px(x)} cy={py(y)} r="4" fill="#f2efe9" stroke="#5a5a50" />
          <circle cx={px(x)} cy={py(y)} r="2" fill="#5a5a50" />
        </g>
      ))}
      {(tile.dots || []).map(([x, y]) => (
        <circle key={`${x}-${y}`} cx={px(x)} cy={py(y)} r="3" fill="#fff" stroke="#8a8a80" />
      ))}
      {tile.names.map(([name, x, y, city]) => (
        <PlaceName key={name + y} $city={city} x={px(x)} y={py(y)}>{name}</PlaceName>
      ))}
    </g>
  );
}

function Distribution() {
  const orange = "#d95f02";
  return (
    <g transform={`translate(487.3 -9.3) scale(${SX} ${SY})`} fill={orange} fillOpacity="0.5" stroke={orange} strokeOpacity="0.6" strokeLinejoin="round">
      <path vectorEffect="non-scaling-stroke" strokeWidth="6" d="M132,1370 480,1160H505L650,1448Z" />
      <path
        vectorEffect="non-scaling-stroke"
        strokeWidth="6"
        d="M-346,1355 0,1410 640,1500 1140,1570 1380,1660 1490,1705 1767,1910 1770,2000 1502,2460 1345,2462 930,2215 745,2100 700,2040 668,1970 682,1920 692,1860 705,1820 712,1760 700,1725 650,1690 600,1700 550,1705 525,1670 500,1610 480,1595 430,1602 370,1605 335,1635 285,1645 205,1685 170,1665 120,1660 30,1675 -261,1490 -291,1435 -320,1400Z"
      />
      <g fill="none" strokeOpacity="0.95" strokeLinecap="round">
        <path vectorEffect="non-scaling-stroke" strokeWidth="9" d="M-343,1358 -330,1372 M-315,1405 -290,1425 -288,1445 M-280,1470 -262,1492" />
        <path vectorEffect="non-scaling-stroke" strokeWidth="12" d="M520,1640 530,1672 550,1700 580,1685 605,1698" />
        <path vectorEffect="non-scaling-stroke" strokeWidth="7" d="M692,1870 694,1925 M668,1955 672,1990 M370,1606 372,1607" />
        <path vectorEffect="non-scaling-stroke" strokeWidth="5" strokeOpacity="0.7" d="M362,1490V1530 M406,1535V1536 M406,1572V1573 M645,1680V1690 M742,2096V2097 M712,1914V1915" />
      </g>
      <path d="M645,1735 668,1725 672,1745 655,1765Z" fill="#f0958a" fillOpacity="0.9" stroke="none" />
      <circle cx="605" cy="1842" r="8" fill="#c060e0" fillOpacity="0.9" stroke="none" />
      <path d="M565,1895 580,1890 578,1930 560,1930Z" fill="#8a6fa0" fillOpacity="0.9" stroke="none" />
    </g>
  );
}

const MapPicture = () => (
  <MapArt viewBox="0 0 1525 764" preserveAspectRatio="xMidYMid slice" role="img" aria-label="Distribution map of Africa">
    <defs>
      <filter id="jagged" x="-5%" y="-5%" width="110%" height="110%">
        <feTurbulence type="fractalNoise" baseFrequency="0.07" numOctaves="2" seed="4" />
        <feDisplacementMap in="SourceGraphic" scale="9" xChannelSelector="R" yChannelSelector="G" />
      </filter>
    </defs>
    {tiles.map((tile, i) => <Tile key={i} tile={tile} index={i} />)}
    {tiles.map((tile, i) => <TileNames key={i} tile={tile} />)}
    <Distribution />
  </MapArt>
);

/* ---------- map controls ---------- */

const Toolbars = styled.div`
  position: absolute;
  top: 14px;
  left: 14px;
  display: grid;
  gap: 15px;
`;

const Toolbar = styled.div`
  display: flex;
  flex-direction: column;
  width: 45px;
  border-radius: ${(p) => (p.$cut ? "4px 4px 0 0" : "4px")};
  overflow: hidden;
  background: #fff;
  box-shadow: 0 1px 4px rgba(0, 0, 0, 0.5);
  width: 39px;
`;

const ToolButton = styled.button`
  display: grid;
  place-items: center;
  height: ${(p) => (p.$short ? 36 : 39)}px;
  padding: 0;
  border: 0;
  background: #fff;
  & + & { border-top: 1px solid #bbb; }
`;

const LayersButton = styled.button`
  position: absolute;
  left: 14px;
  bottom: 11px;
  display: grid;
  place-items: center;
  width: 57px;
  height: 57px;
  padding: 0;
  border: 0;
  border-radius: 6px;
  background: #fff;
  box-shadow: 0 1px 4px rgba(0, 0, 0, 0.5);
`;

const SearchBox = styled.form`
  position: absolute;
  top: 12px;
  right: 12px;
  display: flex;
  align-items: center;
  gap: 7px;
  padding: 5px 6px 5px 3px;
  border-radius: 4px;
  background: #fff;
  box-shadow: 0 1px 7px rgba(0, 0, 0, 0.5);
`;

const SearchInput = styled.input`
  width: 262px;
  height: 24px;
  padding: 0 3px;
  border: 2px solid #555;
  border-radius: 2px;
  font-size: 15px;
  &::placeholder { color: #7a828c; opacity: 1; }
`;

const SearchButton = styled.button`
  display: grid;
  padding: 0;
  border: 0;
  background: none;
`;

const Scale = styled.div`
  position: absolute;
  right: 12px;
  bottom: 24px;
  width: 107px;
  font-size: 14px;
  line-height: 18px;
  color: #444;
`;

const ScaleLine = styled.div`
  width: ${(p) => (p.$full ? 107 : 65)}px;
  height: 20px;
  padding-left: 6px;
  border: 2px solid #777;
  border-top-width: ${(p) => (p.$full ? 2 : 0)}px;
  border-bottom-width: 0;
  background: rgba(255, 255, 255, 0.5);
`;

const Attribution = styled.footer`
  position: absolute;
  right: 0;
  bottom: 0;
  padding: 0 7px 0 6px;
  background: rgba(255, 255, 255, 0.7);
  font-size: 14px;
  line-height: 18px;
  color: #333;
  white-space: pre;
`;

const MapLink = styled.a`
  color: #0078a8;
  text-decoration: none;
`;

/* ---------- popup ---------- */

const Popup = styled.div`
  position: absolute;
  top: 0;
  left: 522px;
  width: 297px;
  padding: 23px 27px 17px 25px;
  border-radius: 0 0 12px 12px;
  background: #fff;
  box-shadow: 0 3px 14px rgba(0, 0, 0, 0.4);
  color: #333;
  &::after {
    content: "";
    position: absolute;
    top: 100%;
    left: 134px;
    border: 14px solid transparent;
    border-top-color: #fff;
    border-bottom: 0;
  }
`;

const PopupLabel = styled.div`
  margin-top: ${(p) => p.$gap || 0}px;
  font-size: 15px;
  font-weight: bold;
  line-height: 20px;
`;

const Choices = styled.div`
  display: flex;
  gap: 5px;
`;

const Choice = styled.button`
  width: 27px;
  height: 45px;
  padding: 0;
  border: 0;
  border-radius: 4px;
  background: ${(p) => (p.$on ? "#69c957" : "#b0f49e")};
  color: #fff;
  font-size: 17px;
  font-weight: bold;
`;

const Button = styled.button`
  display: flex;
  align-items: center;
  justify-content: center;
  gap: 5px;
  width: ${(p) => (p.$block ? "100%" : "auto")};
  height: 61px;
  padding: 0 40px;
  border: 0;
  border-radius: 4px;
  background: ${(p) => (p.$tone === "warn" ? "#dda319" : "#009239")};
  color: #fff;
  font-size: 19px;
  white-space: nowrap;
`;

const PopupButton = styled(Button)`
  padding: 0;
  font-size: 18px;
  font-weight: bold;
`;

function ChoiceRow({ label, count, gap }) {
  const [value, setValue] = useState(1);
  return (
    <div role="group" aria-label={label}>
      <PopupLabel $gap={gap}>{label}:</PopupLabel>
      <Choices>
        {Array.from({ length: count }, (_, i) => i + 1).map((n) => (
          <Choice key={n} type="button" $on={n === value} aria-pressed={n === value} onClick={() => setValue(n)}>{n}</Choice>
        ))}
      </Choices>
    </div>
  );
}

/* ---------- accordion ---------- */

const Accordion = styled.section`
  margin: 7px 6px 0 2px;
  padding-top: 20px;
  border-left: 2px solid #dee2e6;
  border-bottom: 3px solid #dee2e6;
  border-radius: 0 0 0 8px;
  font-family: ${panelFont};
`;

const AccordionButton = styled.button`
  display: flex;
  align-items: baseline;
  width: 100%;
  height: 139px;
  padding: 34px 56px 0 56px;
  border: 0;
  border-top: 3px solid #dee2e6;
  background: none;
  color: #212529;
  font-size: 42px;
  line-height: 64px;
  text-align: left;
`;

const AccordionIcon = styled.span`
  width: 70px;
  font-size: 32px;
`;

const Chevron = styled.svg`
  margin-left: auto;
`;

/* ---------- edit panel ---------- */

const Panel = styled.section`
  margin-top: 79px;
  padding: 20px 20px 20px;
  border: 2px solid #e3e6e8;
  border-radius: 4px;
  background: #f7f7f7;
  font-family: ${panelFont};
`;

const Heading = styled.h2`
  margin: ${(p) => p.$gap || 0}px 0 0;
  font-size: 40px;
  font-weight: 400;
  line-height: 48px;
  text-align: center;
  color: #111;
`;

const SliderRow = styled.div`
  display: flex;
  align-items: flex-start;
  justify-content: space-between;
  height: 142px;
  padding-right: 33px;
`;

const Rows = styled.div`
  margin-top: 14px;
`;

const SliderField = styled.div`
  width: 458px;
`;

const SliderLabel = styled.label`
  display: block;
  font-size: 20px;
  line-height: 24px;
  text-align: center;
  color: #222;
`;

const Badges = styled.div`
  display: flex;
  justify-content: space-between;
  margin-top: 14px;
`;

const Badge = styled.span`
  width: ${(p) => (p.$active ? 24 : 36)}px;
  height: ${(p) => (p.$active ? 26 : 24)}px;
  border-radius: 3px;
  background: ${(p) => (p.$active ? "#007bc2" : "#dfdfdf")};
  color: ${(p) => (p.$active ? "#fff" : "#555")};
  font-size: 12px;
  line-height: 24px;
  text-align: center;
`;

const Range = styled.input`
  display: block;
  appearance: none;
  width: 100%;
  height: 26px;
  margin: 6px 0 0;
  background: linear-gradient(#777, #777) center / 100% 3px no-repeat;
  &::-webkit-slider-thumb {
    appearance: none;
    width: 25px;
    height: 25px;
    border: 0;
    border-radius: 50%;
    background: #007bc2;
  }
`;

const Ticks = styled.div`
  display: flex;
  justify-content: space-between;
  margin-top: -12px;
`;

const Tick = styled.span`
  display: flex;
  flex-direction: column;
  align-items: center;
  width: 25px;
  font-size: 12px;
  line-height: 14px;
  color: #777;
  &::before {
    content: "";
    width: 1px;
    height: 9px;
    margin-bottom: 1px;
    background: #444;
  }
  &:first-child::before { visibility: hidden; }
`;

const RowButton = styled(Button)`
  width: 173px;
  margin-top: 42px;
  padding: 0;
`;

const ButtonLine = styled.div`
  display: flex;
  justify-content: center;
  gap: 6px;
  margin-top: 12px;
  padding-right: ${(p) => p.$shift || 0}px;
`;

const ArrowIcon = () => (
  <svg width="18" height="16" viewBox="0 0 18 16" fill="none" stroke="#fff" strokeWidth="3" aria-hidden="true">
    <path d="M0 8h15M9 1.500l6.500 6.500L9 14.500" />
  </svg>
);

function SliderControl({ id, name }) {
  const [value, setValue] = useState(0);
  return (
    <SliderRow>
      <SliderField>
        <SliderLabel htmlFor={id}>{name} (%)</SliderLabel>
        <Badges>
          <Badge $active>{value}</Badge>
          <Badge>100</Badge>
        </Badges>
        <Range id={id} type="range" min="0" max="100" value={value} onChange={(e) => setValue(Number(e.target.value))} />
        <Ticks>
          {[0, 10, 20, 30, 40, 50, 60, 70, 80, 90, 100].map((n) => <Tick key={n}>{n}</Tick>)}
        </Ticks>
      </SliderField>
      <RowButton type="button"><ArrowIcon />{name}</RowButton>
    </SliderRow>
  );
}

export default function App() {
  return (
    <Page>
      <GlobalStyle />

      <Callouts $side="left">
        <Callout>Draw lines to split polygons</Callout>
        <Callout $gap={78}>Draw a new polygon</Callout>
        <Callout $gap={78}>Edit an existing polygon</Callout>
        <Tip>Right-click on a point to remove it</Tip>
        <Callout $gap={59}>Drag an existing polygon</Callout>
        <Callout $gap={89} $tall>Click on a polygon to remove it<br />or edit presence / origin / seasonal</Callout>
        <Callout $gap={42}>Change background</Callout>
        <Callout $gap={98} $tall $inset={18}>Complete text attributes<br />(compiler, data sensitive...)</Callout>
      </Callouts>

      <Centre>
        <MapFrame>
          <MapPicture />

          <Popup>
            <PopupLabel>Remove this polygon:</PopupLabel>
            <PopupButton type="button" $tone="warn" $block><FaTrash size={20} />Remove polygon</PopupButton>
            <ChoiceRow label="Edit Presence" count={6} gap={21} />
            <ChoiceRow label="Edit Origin" count={6} />
            <ChoiceRow label="Edit Seasonal" count={5} />
          </Popup>

          <Toolbars>
            <Toolbar>
              <ToolButton type="button" aria-label="Zoom in">
                <svg width="18" height="18" viewBox="0 0 18 18" stroke="#000" strokeWidth="3"><path d="M0 9h18M9 0v18" /></svg>
              </ToolButton>
              <ToolButton type="button" aria-label="Zoom out">
                <svg width="18" height="18" viewBox="0 0 18 18" stroke="#000" strokeWidth="3"><path d="M0 9h18" /></svg>
              </ToolButton>
            </Toolbar>
            <Toolbar>
              <ToolButton type="button" aria-label="Draw lines">
                <svg width="24" height="24" viewBox="0 0 24 24" fill="none" stroke="#555" strokeWidth="2">
                  <circle cx="19" cy="5" r="3" /><circle cx="5" cy="19" r="3" /><path d="M7 17 17 7" strokeWidth="3" />
                </svg>
              </ToolButton>
              <ToolButton type="button" aria-label="Draw polygon">
                <svg width="24" height="24" viewBox="0 0 24 24" fill="none" stroke="#555" strokeWidth="2">
                  <circle cx="20" cy="4" r="3" /><circle cx="4" cy="20" r="3" /><circle cx="20" cy="20" r="3" /><path d="M6 18 18 6M20 7v10M7 20h10" strokeWidth="3" />
                </svg>
              </ToolButton>
            </Toolbar>
            <Toolbar $cut>
              <ToolButton type="button" aria-label="Edit polygon">
                <svg width="24" height="24" viewBox="0 0 24 24" fill="none" stroke="#555" strokeWidth="2">
                  <path d="M1 13C4 8 6 7 9 6M14 3 19 1" strokeWidth="3" /><circle cx="11" cy="5" r="3" /><path d="M12 8v14l4-3 3 4 1-1-2-4 3-1z" fill="#555" stroke="#555" strokeWidth="1" />
                </svg>
              </ToolButton>
              <ToolButton type="button" aria-label="Drag polygon" $short>
                <svg width="24" height="24" viewBox="0 0 24 24" fill="#555">
                  <path d="M12 0l5 6h-4v5h5V7l6 5-6 5v-4h-5v5h4l-5 6-5-6h4v-5H6v4l-6-5 6-5v4h5V6H7z" />
                </svg>
              </ToolButton>
            </Toolbar>
          </Toolbars>

          <SearchBox onSubmit={(e) => e.preventDefault()}>
            <SearchInput type="text" aria-label="Search" placeholder="Search using OSM Geocoder" />
            <SearchButton type="submit" aria-label="Find">
              <svg width="20" height="20" viewBox="0 0 20 20" fill="none" stroke="#111">
                <circle cx="8" cy="8" r="6" strokeWidth="3" /><path d="M12 12l7 7" strokeWidth="4" />
              </svg>
            </SearchButton>
          </SearchBox>

          <LayersButton type="button" aria-label="Layers">
            <svg width="36" height="36" viewBox="0 0 36 36">
              <path d="M1 24 18 13 35 24 18 35Z" fill="#a8a8a8" />
              <path d="M1 19 18 8 35 19 18 30Z" fill="#c0c0c0" stroke="#f4f4f4" />
              <path d="M1 14 18 24 35 14 18 26Z" fill="#8f8f8f" />
              <path d="M1 13 18 2 35 13 18 24Z" fill="#f0f0f0" />
              <path d="M7 13 18 6 29 13 18 22Z" fill="#dadada" />
            </svg>
          </LayersButton>

          <Scale>
            <ScaleLine>500 km</ScaleLine>
            <ScaleLine $full>500 mi</ScaleLine>
          </Scale>
          <Attribution>
            <MapLink href="#leaflet">Leaflet</MapLink> | Powered by <MapLink href="#esri">Esri</MapLink> | © <MapLink href="#osm">OpenStreetMap</MapLink>, <MapLink href="#odbl">ODbL</MapLink>
          </Attribution>
        </MapFrame>

        <Accordion>
          <AccordionButton type="button" aria-expanded="false">
            <AccordionIcon aria-hidden="true">Aa</AccordionIcon>
            Fill text attributes
            <Chevron width="44" height="28" viewBox="0 0 44 28" fill="none" stroke="#212529" strokeWidth="4" strokeLinecap="round" strokeLinejoin="round" aria-hidden="true">
              <path d="M2 3l20 21L42 3" />
            </Chevron>
          </AccordionButton>
        </Accordion>
      </Centre>

      <Panel>
        <Heading>Edit distribution</Heading>
        <Rows>
          <SliderControl id="simplify" name="Simplify" />
          <SliderControl id="smooth" name="Smooth" />
        </Rows>
        <Heading $gap={57}>Split polygons</Heading>
        <ButtonLine $shift={26}>
          <Button type="button"><FaCut size={20} />Split polygons by lines</Button>
        </ButtonLine>
        <Heading $gap={60}>Save changes</Heading>
        <ButtonLine>
          <Button type="button" $tone="warn"><FaTrash size={18} />Discard changes</Button>
          <Button type="button"><FaRegSave size={20} />Save changes</Button>
        </ButtonLine>
      </Panel>

      <Callouts $side="right">
        <Callout $tall>Simplify polygon geometries<br />(set percentage, then click button)</Callout>
        <Hint>→ when you want to edit the distribution manually<br />but there are hundreds of nodes to move around</Hint>
        <Callout $tall $gap={58}>Smooth polygon borders<br />(set percentage, then click button)</Callout>
        <Hint $gap={-6}>→ when your distribution has sharp angles<br />and you want it to be softer</Hint>
        <Callout $tall $gap={64}>Cut polygons after drawing lines</Callout>
        <Hint $gap={3}>→ when you want to split a polygon to assign<br />different attributes, or when you want to<br />remove part of a polygon</Hint>
        <Callout $tall $gap={74}>Save polygons when you<br />finished editing</Callout>
      </Callouts>

      <Leaders viewBox="0 0 4721 1234" stroke="#000" strokeWidth="6" aria-hidden="true">
        {leaderLines.map(([x1, y1, x2, y2]) => <line key={`${x1}-${y1}`} x1={x1} y1={y1} x2={x2} y2={y2} />)}
      </Leaders>
    </Page>
  );
}
